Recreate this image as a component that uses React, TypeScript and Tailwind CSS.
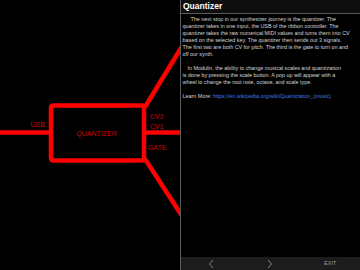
import React from "react";

function Diagram() {
  const red = "#ff0000";
  const label = "#d00000";
  return (
    <svg width="180" height="270" viewBox="0 0 180 270" className="block">
      <line x1="0" y1="132.5" x2="51" y2="132.5" stroke={red} strokeWidth="4.5" />
      <rect x="51" y="105.5" width="93" height="55" rx="2" fill="none" stroke={red} strokeWidth="4.5" />
      <line x1="144" y1="132.5" x2="182" y2="132.5" stroke={red} strokeWidth="4.5" />
      <line x1="145" y1="107" x2="184" y2="43" stroke={red} strokeWidth="4.5" />
      <line x1="145" y1="159" x2="184" y2="219" stroke={red} strokeWidth="4.5" />
      <g fill={label} fontFamily="'Liberation Sans', Arial, sans-serif" fontSize="7">
        <text x="30.5" y="126.5">USB</text>
        <text x="96.5" y="135.5" textAnchor="middle">QUANTIZER</text>
        <text x="150" y="118.5">CV2</text>
        <text x="150" y="129">CV1</text>
        <text x="148" y="149.5">GATE</text>
      </g>
    </svg>
  );
}

function Chevron({ dir }: { dir: "left" | "right" }) {
  return (
    <svg width="6" height="10" viewBox="0 0 6 10">
      <polyline
        points={dir === "left" ? "5,1 1.5,5 5,9" : "1,1 4.5,5 1,9"}
        fill="none"
        stroke="#8a8a8a"
        strokeWidth="1"
      />
    </svg>
  );
}

export default function App() {
  return (
    <div
      className="w-[360px] h-[270px] bg-black flex overflow-hidden"
      style={{ fontFamily: "'Liberation Sans', Arial, sans-serif" }}
    >
      <div className="w-[180px] h-[270px] shrink-0">
        <Diagram />
      </div>
      <div className="flex-1 h-[270px] flex flex-col border-l border-[#5a5a5a] bg-black">
        <div className="h-[14px] border-b border-[#5a5a5a] bg-[#0e0e0e] pl-[2px] flex items-center">
          <span className="text-[8.5px] font-bold text-white leading-none">Quantizer</span>
        </div>
        <div className="flex-1 pl-[1.5px] pr-[4px] pt-[2px] text-[5.4px] leading-[7px] text-[#d4d4d4]">
          <p className="indent-[8px]">
            The next stop in our synthesizer journey is the quantizer. The
            <br />
            quantizer takes in one input, the USB of the ribbon controller. The
            <br />
            quantizer takes the raw numerical MIDI values and turns them into CV
            <br />
            based on the selected key. The quantizer then sends out 3 signals.
            <br />
            The first two are both CV for pitch. The third is the gate to turn on and
            <br />
            off our synth.
          </p>
          <p className="h-[7px]"></p>
          <p className="indent-[5px]">
            In Modulin, the ability to change musical scales and quantization
            <br />
            is done by pressing the scale button. A pop up will appear with a
            <br />
            wheel to change the root note, octave, and scale type.
          </p>
          <p className="h-[7px]"></p>
          <p>
            Learn More: <span className="text-[#3f7be6]">https://en.wikipedia.org/wiki/Quantization_(music)</span>
          </p>
        </div>
        <div className="h-[13px] bg-[#1c1c1c] grid grid-cols-3 items-center">
          <div className="flex justify-center">
            <Chevron dir="left" />
          </div>
          <div className="flex justify-center">
            <Chevron dir="right" />
          </div>
          <div className="flex justify-center">
            <span className="text-[5.5px] text-[#9a9a9a] leading-none">EXIT</span>
          </div>
        </div>
      </div>
    </div>
  );
}
